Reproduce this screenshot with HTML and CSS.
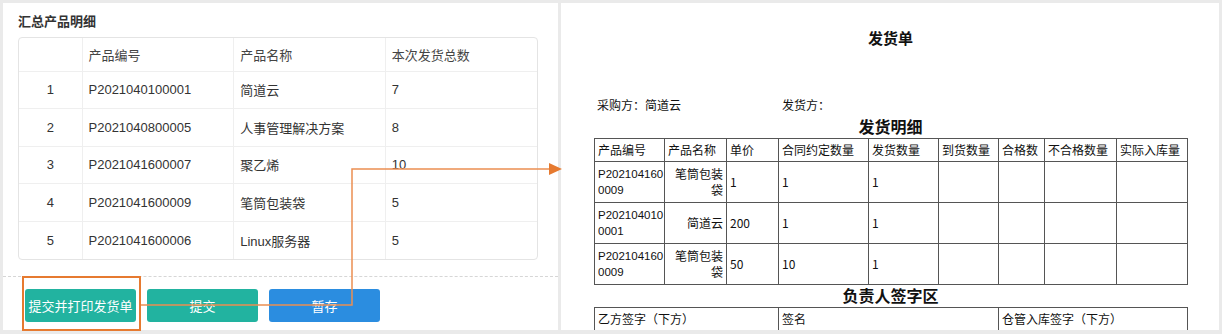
FILE: index.html
```html
<!DOCTYPE html>
<html lang="zh-CN">
<head>
  <meta charset="UTF-8" />
  <title>汇总产品明细 - 发货单</title>
  <link rel="stylesheet" href="styles.css">
</head>
<body>

  <div class="screen">

    <section class="panel form-panel">
      <h3 class="panel-title">汇总产品明细</h3>
      <div class="grid-box">
        <table class="grid">
          <colgroup>
            <col class="c-idx"><col><col><col>
          </colgroup>
          <thead>
            <tr>
              <th></th>
              <th>产品编号</th>
              <th>产品名称</th>
              <th>本次发货总数</th>
            </tr>
          </thead>
          <tbody>
            <tr><td class="idx">1</td><td>P2021040100001</td><td>简道云</td><td>7</td></tr>
            <tr><td class="idx">2</td><td>P2021040800005</td><td>人事管理解决方案</td><td>8</td></tr>
            <tr><td class="idx">3</td><td>P2021041600007</td><td>聚乙烯</td><td>10</td></tr>
            <tr><td class="idx">4</td><td>P2021041600009</td><td>笔筒包装袋</td><td>5</td></tr>
            <tr><td class="idx">5</td><td>P2021041600006</td><td>Linux服务器</td><td>5</td></tr>
          </tbody>
        </table>
      </div>
      <div class="actions">
        <button class="btn btn-teal">提交并打印发货单</button>
        <button class="btn btn-teal">提交</button>
        <button class="btn btn-blue">暂存</button>
      </div>
    </section>

    <section class="panel print-panel">
      <h2 class="doc-title">发货单</h2>
      <div class="doc-info">
        <span class="info-buyer">采购方：简道云</span>
        <span>发货方：</span>
      </div>
      <h3 class="doc-sub">发货明细</h3>
      <table class="sheet">
        <colgroup>
          <col style="width:70px"><col style="width:62px"><col style="width:52px">
          <col style="width:90px"><col style="width:70px"><col style="width:60px">
          <col style="width:46px"><col style="width:72px"><col style="width:71px">
        </colgroup>
        <thead>
          <tr>
            <th>产品编号</th><th>产品名称</th><th>单价</th><th>合同约定数量</th><th>发货数量</th>
            <th>到货数量</th><th>合格数</th><th>不合格数量</th><th>实际入库量</th>
          </tr>
        </thead>
        <tbody>
          <tr>
            <td class="code">P202104160<br>0009</td><td class="name">笔筒包装袋</td><td>1</td><td>1</td><td>1</td>
            <td></td><td></td><td></td><td></td>
          </tr>
          <tr>
            <td class="code">P202104010<br>0001</td><td class="name">简道云</td><td>200</td><td>1</td><td>1</td>
            <td></td><td></td><td></td><td></td>
          </tr>
          <tr>
            <td class="code">P202104160<br>0009</td><td class="name">笔筒包装袋</td><td>50</td><td>10</td><td>1</td>
            <td></td><td></td><td></td><td></td>
          </tr>
        </tbody>
      </table>
      <h3 class="doc-sub sign-title">负责人签字区</h3>
      <table class="sheet sign">
        <colgroup>
          <col style="width:184px"><col style="width:220px"><col style="width:189px">
        </colgroup>
        <tr><td>乙方签字（下方）</td><td>签名</td><td>仓管入库签字（下方）</td></tr>
        <tr><td></td><td></td><td></td></tr>
      </table>
    </section>

    <!-- annotation: highlight + arrow to the printed sheet -->
    <svg class="annot" width="1222" height="334" viewBox="0 0 1222 334">
      <rect x="23" y="277" width="117" height="53" fill="none" stroke="#e67a30" stroke-width="2"/>
      <polyline points="141,305 352,305 352,169 550,169" fill="none" stroke="#ec8f52" stroke-width="1.5"/>
      <polygon points="549,163 562,169 549,175" fill="#e67a30"/>
    </svg>

  </div>

</body>
</html>
```

FILE: styles.css
```css
* {
  box-sizing: border-box;
}

body {
  margin: 0;
  background-color: #eaeaea;
  font-family: "Liberation Sans", "Noto Sans CJK SC", sans-serif;
  color: #333;
}

.screen {
  position: relative;
  width: 1222px;
  height: 334px;
  padding: 3px 3px 4px 3px;
  display: flex;
  gap: 3px;
}

.panel {
  background: #fff;
  height: 327px;
  overflow: hidden;
}

/* ---- left: form ---- */

.form-panel {
  width: 555px;
  padding: 9px 20px 0 15px;
}

.panel-title {
  margin: 0 0 5px;
  font-size: 13px;
  line-height: 20px;
  font-weight: bold;
  color: #333;
}

.grid-box {
  border: 1px solid #e4e4e4;
  border-radius: 4px;
  overflow: hidden;
}

.grid {
  width: 100%;
  border-collapse: collapse;
  table-layout: fixed;
  font-size: 13px;
  color: #333;
}

.grid .c-idx {
  width: 63px;
}

.grid th,
.grid td {
  text-align: left;
  font-weight: normal;
  padding: 0 6px;
  border-left: 1px solid #efefef;
  border-top: 1px solid #efefef;
}

.grid th:first-child,
.grid td:first-child {
  border-left: none;
}

.grid th {
  height: 33px;
  border-top: none;
  color: #444;
}

.grid td {
  height: 37.6px;
}

.grid td.idx {
  text-align: center;
}

.actions {
  margin: 16px -20px 0 -15px;
  padding: 12px 0 0 22px;
  border-top: 1px dashed #d6d6d6;
  display: flex;
  gap: 11px;
}

.btn {
  width: 111px;
  height: 33px;
  border: none;
  border-radius: 3px;
  color: #fff;
  font-family: "Noto Sans CJK SC", sans-serif;
  font-size: 13px;
  padding: 0;
}

.btn-teal {
  background-color: #22b3a0;
}

.btn-blue {
  background-color: #2b8de0;
}

/* ---- right: printed sheet ---- */

.print-panel {
  width: 658px;
  padding: 25px 0 0 33px;
  font-family: "Noto Sans CJK SC", sans-serif;
  color: #111;
}

.doc-title {
  margin: 0;
  width: 593px;
  text-align: center;
  font-size: 15px;
  line-height: 20px;
  font-weight: bold;
}

.doc-info {
  margin-top: 49px;
  padding-left: 3px;
  display: flex;
  font-size: 12px;
  line-height: 16px;
}

.info-buyer {
  width: 185px;
}

.doc-sub {
  margin: 3px 0 2px;
  width: 593px;
  text-align: center;
  font-size: 16px;
  line-height: 20px;
  font-weight: bold;
}

.sheet {
  width: 593px;
  border-collapse: collapse;
  table-layout: fixed;
  font-size: 12px;
  line-height: 16px;
}

.sheet th,
.sheet td {
  border: 1px solid #555;
  padding: 3px 3px;
  text-align: left;
  font-weight: normal;
}

.sheet th {
  height: 23px;
}

.sheet tbody td {
  height: 41px;
}

.sheet td.code {
  font-family: "Liberation Sans", sans-serif;
  font-size: 11.5px;
}

.sheet td.name {
  text-align: right;
}

.sign-title {
  margin: 0 0 2px;
}

.sheet.sign td {
  height: 22px;
}

.annot {
  position: absolute;
  left: 0;
  top: 0;
  pointer-events: none;
}
```
